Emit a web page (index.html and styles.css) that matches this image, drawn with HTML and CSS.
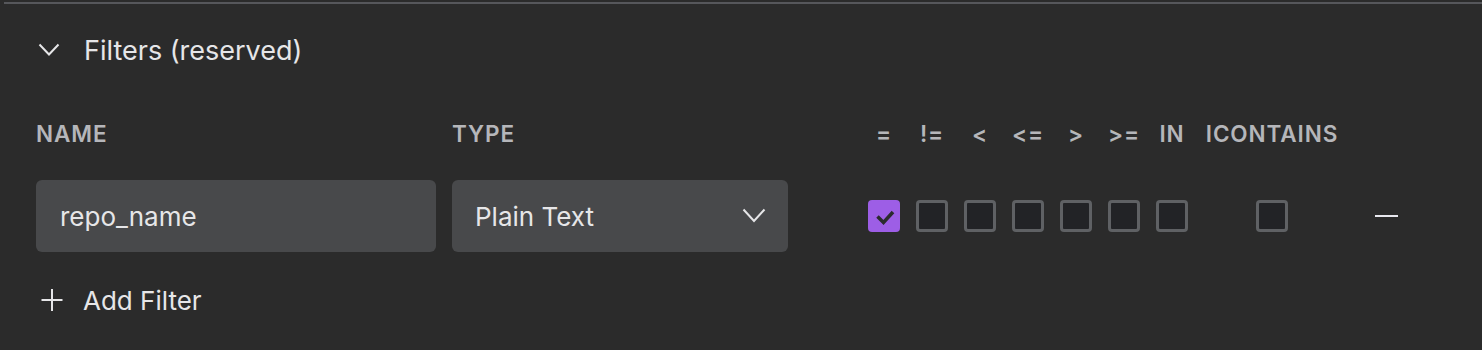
FILE: index.html
```html
<!DOCTYPE html>
<html lang="en">
<head>
    <meta charset="UTF-8">
    <meta name="viewport" content="width=device-width, initial-scale=1.0">
    <title>Filters</title>
    <link rel="stylesheet" href="styles.css">
</head>
<body>
    <div class="panel">
        <!-- Section header -->
        <div class="section-title">
            <svg class="chevron" width="24" height="24" viewBox="0 0 24 24">
                <polyline points="2.5,6.5 12,16.5 21.5,6.5" fill="none" stroke="#e6e6e8" stroke-width="2"/>
            </svg>
            <span>Filters (reserved)</span>
        </div>

        <!-- Column labels -->
        <div class="row labels">
            <div class="col-name">Name</div>
            <div class="col-type">Type</div>
            <div class="col-op">=</div>
            <div class="col-op">!=</div>
            <div class="col-op">&lt;</div>
            <div class="col-op">&lt;=</div>
            <div class="col-op">&gt;</div>
            <div class="col-op">&gt;=</div>
            <div class="col-op">IN</div>
            <div class="col-op wide">ICONTAINS</div>
        </div>

        <!-- Filter row -->
        <div class="row controls">
            <div class="col-name">
                <input type="text" class="field" value="repo_name">
            </div>
            <div class="col-type">
                <div class="field select">
                    <span>Plain Text</span>
                    <svg width="24" height="24" viewBox="0 0 24 24">
                        <polyline points="1.5,5.5 12,17 22.5,5.5" fill="none" stroke="#e6e6e8" stroke-width="2"/>
                    </svg>
                </div>
            </div>
            <div class="col-op">
                <span class="check checked">
                    <svg width="32" height="32" viewBox="0 0 32 32">
                        <polyline points="9.5,16.5 15.5,22.5 25,12" fill="none" stroke="#2b2b2e" stroke-width="3.5"/>
                    </svg>
                </span>
            </div>
            <div class="col-op"><span class="check"></span></div>
            <div class="col-op"><span class="check"></span></div>
            <div class="col-op"><span class="check"></span></div>
            <div class="col-op"><span class="check"></span></div>
            <div class="col-op"><span class="check"></span></div>
            <div class="col-op"><span class="check"></span></div>
            <div class="col-op wide"><span class="check"></span></div>
            <button class="remove" type="button"><span class="minus"></span></button>
        </div>

        <!-- Add filter -->
        <div class="add-filter">
            <svg width="24" height="24" viewBox="0 0 24 24">
                <line x1="12" y1="1" x2="12" y2="23" stroke="#e6e6e8" stroke-width="2"/>
                <line x1="1.5" y1="12" x2="22.5" y2="12" stroke="#e6e6e8" stroke-width="2"/>
            </svg>
            <span>Add Filter</span>
        </div>
    </div>
</body>
</html>
```

FILE: styles.css
```css
/* Body Styles */
body {
    font-family: 'Inter', 'Open Sans', sans-serif;
    background-color: #2b2b2b;
    color: #e6e6e8;
    margin: 0;
    padding: 0;
}

/* Panel with top divider */
.panel {
    margin: 2px 0 0 4px;
    border-top: 2px solid #56575b;
    padding-left: 32px;
}

.section-title {
    height: 92px;
    display: flex;
    align-items: center;
    gap: 23px;
    font-size: 27px;
    color: #e6e6e8;
}

.chevron {
    margin-left: 1px;
}

/* Rows share the same column widths */
.row {
    display: flex;
    align-items: center;
    gap: 16px;
}

.col-name {
    width: 400px;
}

.col-type {
    width: 336px;
    margin-right: 64px;
}

.col-op {
    width: 32px;
    display: flex;
    justify-content: center;
    white-space: nowrap;
}

.col-op.wide {
    width: 132px;
    margin-left: 2px;
}

/* Column labels */
.labels {
    margin-top: 23px;
    height: 28px;
    font-size: 22.5px;
    font-weight: 600;
    letter-spacing: 0.9px;
    text-transform: uppercase;
    color: #b5b6ba;
}

.controls {
    margin-top: 33px;
    height: 72px;
}

/* Input and select */
.field {
    width: 100%;
    height: 72px;
    box-sizing: border-box;
    background: #48494b;
    border: none;
    border-radius: 6px;
    padding: 0 24px;
    font-family: inherit;
    font-size: 26px;
    color: #e6e6e8;
    outline: none;
}

.select {
    display: flex;
    align-items: center;
    justify-content: space-between;
    padding: 0 22px 0 23px;
}

/* Checkboxes */
.check {
    width: 32px;
    height: 32px;
    box-sizing: border-box;
    border: 3px solid #5f6164;
    border-radius: 4px;
    background: #222326;
    display: block;
}

.check.checked {
    border: none;
    background: #9d5ee6;
}

.check svg {
    display: block;
}

/* Remove button */
.remove {
    margin-left: 12px;
    width: 40px;
    height: 40px;
    background: none;
    border: none;
    padding: 0;
    display: flex;
    align-items: center;
    justify-content: center;
    cursor: pointer;
}

.minus {
    width: 23px;
    height: 2px;
    background: #e8e8ee;
}

/* Add filter link */
.add-filter {
    margin-top: 24px;
    height: 48px;
    display: flex;
    align-items: center;
    gap: 19px;
    font-size: 26px;
    color: #e6e6e8;
    padding-left: 4px;
}
```
